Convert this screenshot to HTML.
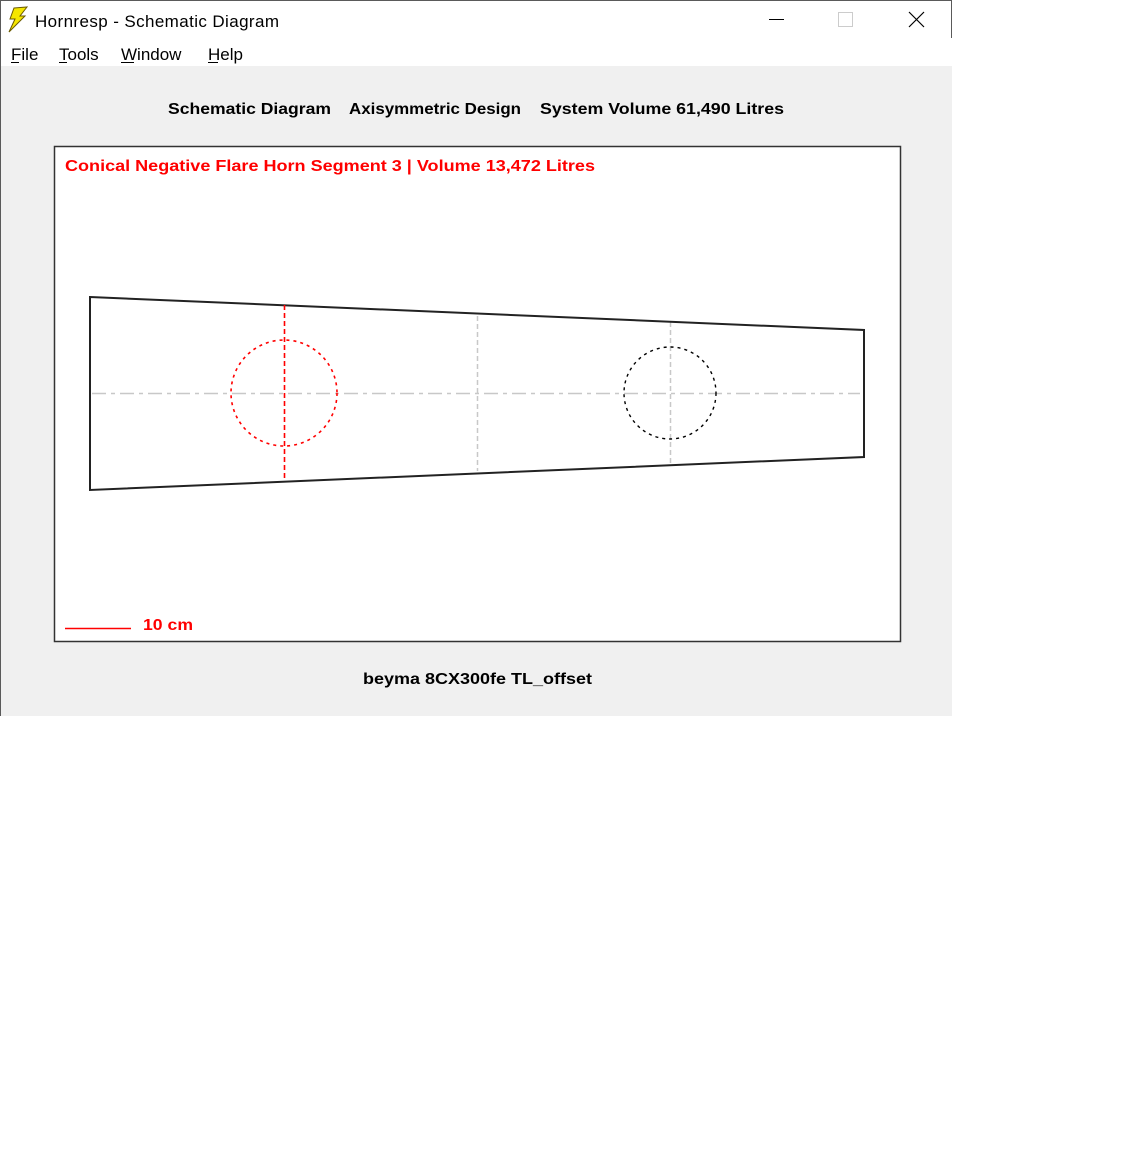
<!DOCTYPE html>
<html><head><style>
html,body{margin:0;padding:0;background:#fff;width:1141px;height:1152px;overflow:hidden}
svg{display:block}
.b{font-family:"Liberation Sans",sans-serif;font-weight:bold;font-size:16px}
</style></head><body>
<svg width="1141" height="1152" xmlns="http://www.w3.org/2000/svg">
<rect x="0" y="0" width="952" height="716" fill="#fff"/>
<rect x="0" y="66" width="952" height="650" fill="#f0f0f0"/>
<line x1="0" y1="0.5" x2="952" y2="0.5" stroke="#5a5a5a"/>
<line x1="0.5" y1="0" x2="0.5" y2="716" stroke="#5a5a5a"/>
<line x1="951.5" y1="0" x2="951.5" y2="38" stroke="#5a5a5a"/>
<path d="M14 8 L27 7 L20 16 L25 16 L9 32 L15 19 L10 19 Z" fill="#f5e600" stroke="#6b5a00" stroke-width="1"/>
<text x="35" y="27" font-family="Liberation Sans,sans-serif" font-size="17" fill="#000" textLength="244">Hornresp - Schematic Diagram</text>
<line x1="769" y1="19.5" x2="784" y2="19.5" stroke="#000"/>
<rect x="838.5" y="12.5" width="14" height="14" fill="none" stroke="#ccc"/>
<path d="M909 12 L924 27 M924 12 L909 27" stroke="#000" stroke-width="1.2"/>
<g font-family="Liberation Sans,sans-serif" font-size="17" fill="#000">
<text x="11" y="60">File</text><text x="59" y="60">Tools</text><text x="121" y="60">Window</text><text x="208" y="60">Help</text>
</g>
<g stroke="#000"><line x1="11" y1="62.5" x2="19" y2="62.5"/><line x1="59" y1="62.5" x2="67" y2="62.5"/><line x1="121" y1="62.5" x2="134" y2="62.5"/><line x1="208" y1="62.5" x2="218" y2="62.5"/></g>
<text class="b" x="168" y="114" fill="#000" textLength="163" lengthAdjust="spacingAndGlyphs">Schematic Diagram</text>
<text class="b" x="349" y="114" fill="#000" textLength="172" lengthAdjust="spacingAndGlyphs">Axisymmetric Design</text>
<text class="b" x="540" y="114" fill="#000" textLength="244" lengthAdjust="spacingAndGlyphs">System Volume 61,490 Litres</text>
<rect x="54.5" y="146.5" width="846" height="495" fill="#fff" stroke="#333" stroke-width="1.5"/>
<text class="b" x="65" y="171" fill="#f00" textLength="530" lengthAdjust="spacingAndGlyphs">Conical Negative Flare Horn Segment 3 | Volume 13,472 Litres</text>
<line x1="92" y1="393.5" x2="860" y2="393.5" stroke="#c8c8c8" stroke-width="1.5" stroke-dasharray="14,5,4,5"/>
<line x1="477.5" y1="316" x2="477.5" y2="471" stroke="#c8c8c8" stroke-width="1.5" stroke-dasharray="5,3"/>
<line x1="670.5" y1="322" x2="670.5" y2="465" stroke="#c8c8c8" stroke-width="1.5" stroke-dasharray="5,3"/>
<path d="M90 297 L864 330 L864 457 L90 490 Z" fill="none" stroke="#222" stroke-width="2"/>
<circle cx="284" cy="393" r="53" fill="none" stroke="#f00" stroke-width="1.6" stroke-dasharray="3,4"/>
<line x1="284.5" y1="305" x2="284.5" y2="480" stroke="#f00" stroke-width="1.6" stroke-dasharray="5,3"/>
<circle cx="670" cy="393" r="46" fill="none" stroke="#000" stroke-width="1.4" stroke-dasharray="3,4"/>
<line x1="65" y1="628.5" x2="131" y2="628.5" stroke="#f00" stroke-width="1.5"/>
<text class="b" x="143" y="630" fill="#f00" textLength="50" lengthAdjust="spacingAndGlyphs">10 cm</text>
<text class="b" x="363" y="684" fill="#000" textLength="229" lengthAdjust="spacingAndGlyphs">beyma 8CX300fe TL_offset</text>
</svg>
</body></html>
